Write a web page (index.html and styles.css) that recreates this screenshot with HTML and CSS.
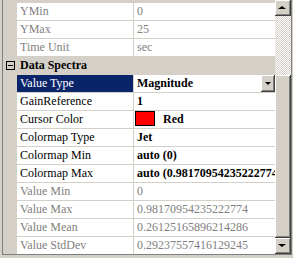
FILE: index.html
```html
<!DOCTYPE html>
<html>
	<head>
		<meta charset="UTF-8">
		<title>Properties</title>
		<link rel="stylesheet" href="styles.css">
	</head>
	<body>
		<div class="view">
			<div class="rows">
				<div class="row"><span class="margin"></span><span class="name ro">YMin</span><span class="value ro">0</span></div>
				<div class="row"><span class="margin"></span><span class="name ro">YMax</span><span class="value ro">25</span></div>
				<div class="row"><span class="margin"></span><span class="name ro">Time Unit</span><span class="value ro">sec</span></div>
				<div class="row cat"><span class="margin"><span class="toggle"></span></span><span class="cat-name">Data Spectra</span></div>
				<div class="row sel">
					<span class="margin"></span><span class="name">Value Type</span>
					<span class="value b drop"><span class="txt">Magnitude</span><span class="dd-btn"></span></span>
				</div>
				<div class="row"><span class="margin"></span><span class="name">GainReference</span><span class="value b">1</span></div>
				<div class="row"><span class="margin"></span><span class="name">Cursor Color</span><span class="value b"><span class="swatch"></span>Red</span></div>
				<div class="row"><span class="margin"></span><span class="name">Colormap Type</span><span class="value b">Jet</span></div>
				<div class="row"><span class="margin"></span><span class="name">Colormap Min</span><span class="value b">auto (0)</span></div>
				<div class="row"><span class="margin"></span><span class="name">Colormap Max</span><span class="value b">auto (0.98170954235222774)</span></div>
				<div class="row"><span class="margin"></span><span class="name ro">Value Min</span><span class="value ro">0</span></div>
				<div class="row"><span class="margin"></span><span class="name ro">Value Max</span><span class="value ro">0.98170954235222774</span></div>
				<div class="row"><span class="margin"></span><span class="name ro">Value Mean</span><span class="value ro">0.26125165896214286</span></div>
				<div class="row"><span class="margin"></span><span class="name ro">Value StdDev</span><span class="value ro">0.29237557416129245</span></div>
			</div>
			<div class="scrollbar">
				<div class="sb-btn up"></div>
				<div class="sb-track"></div>
				<div class="sb-btn thumb"></div>
				<div class="sb-btn down"></div>
			</div>
		</div>
	</body>
</html>
```
FILE: styles.css
```css
*{
    margin: 0;
    padding: 0;
    box-sizing: border-box;
}
body{
    background: #d4d0c8;
    font-family: "Liberation Serif", serif;
    font-size: 12px;
    color: #000;
}
.view{
    display: flex;
    margin-left: 2px;
    width: 290px;
    height: 255px;
    border-left: 1px solid #808080;
    border-right: 1px solid #808080;
    border-bottom: 1px solid #808080;
}
.rows{
    display: flex;
    flex-direction: column;
    gap: 1px;
    width: 272px;
    padding-top: 3px;
    background: #d4d0c8;
    overflow: hidden;
}
.row{
    flex: none;
    display: grid;
    grid-template-columns: 14px 116px 142px;
    height: 17px;
    line-height: 17px;
    background: #fff;
}
.margin{
    display: flex;
    align-items: center;
    padding-left: 3px;
    background: #d4d0c8;
}
.name{
    padding-left: 3px;
    white-space: nowrap;
    overflow: hidden;
}
.value{
    display: flex;
    align-items: center;
    padding-left: 3px;
    border-left: 1px solid #d4d0c8;
    white-space: nowrap;
    overflow: hidden;
}
.ro{
    color: #808080;
}
.b{
    font-weight: bold;
}
.sel .name{
    background: #0a246a;
    color: #fff;
}
.cat{
    background: #d4d0c8;
}
.cat-name{
    grid-column: 2 / 4;
    padding-left: 3px;
    font-weight: bold;
}
.toggle{
    position: relative;
    width: 9px;
    height: 9px;
    border: 1px solid #000;
}
.toggle::after{
    content: "";
    position: absolute;
    left: 1px;
    top: 3px;
    width: 5px;
    height: 1px;
    background: #000;
}
.drop{
    padding-right: 0;
}
.drop .txt{
    flex: 1;
    overflow: hidden;
}
.swatch{
    flex: none;
    width: 20px;
    height: 15px;
    margin: 0 8px 2px -2px;
    border: 1px solid #000;
    background: #ff0000;
    align-self: flex-start;
    margin-top: 0;
}
.dd-btn,
.sb-btn{
    position: relative;
    flex: none;
    background: #d4d0c8;
    box-shadow: inset -1px -1px #404040, inset 1px 1px #fff, inset -2px -2px #808080, inset 2px 2px #d4d0c8;
}
.dd-btn{
    width: 14px;
    height: 17px;
}
.dd-btn::after{
    content: "";
    position: absolute;
    left: 4px;
    top: 7px;
    border-left: 3px solid transparent;
    border-right: 3px solid transparent;
    border-top: 3px solid #000;
}
.scrollbar{
    display: flex;
    flex-direction: column;
    width: 16px;
}
.sb-btn.up,
.sb-btn.down{
    height: 16px;
}
.sb-btn.up::after,
.sb-btn.down::after{
    content: "";
    position: absolute;
    left: 4px;
    top: 6px;
    border-left: 3px solid transparent;
    border-right: 3px solid transparent;
}
.sb-btn.up::after{
    border-bottom: 3px solid #000;
    border-left-width: 4px;
    border-right-width: 4px;
    left: 3px;
}
.sb-btn.down::after{
    border-top: 3px solid #000;
    border-left-width: 4px;
    border-right-width: 4px;
    left: 3px;
}
.sb-track{
    height: 59px;
    background: repeating-conic-gradient(#fff 0 25%, #d4d0c8 0 50%) 0 0 / 2px 2px;
}
.thumb{
    flex: 1;
}
```
